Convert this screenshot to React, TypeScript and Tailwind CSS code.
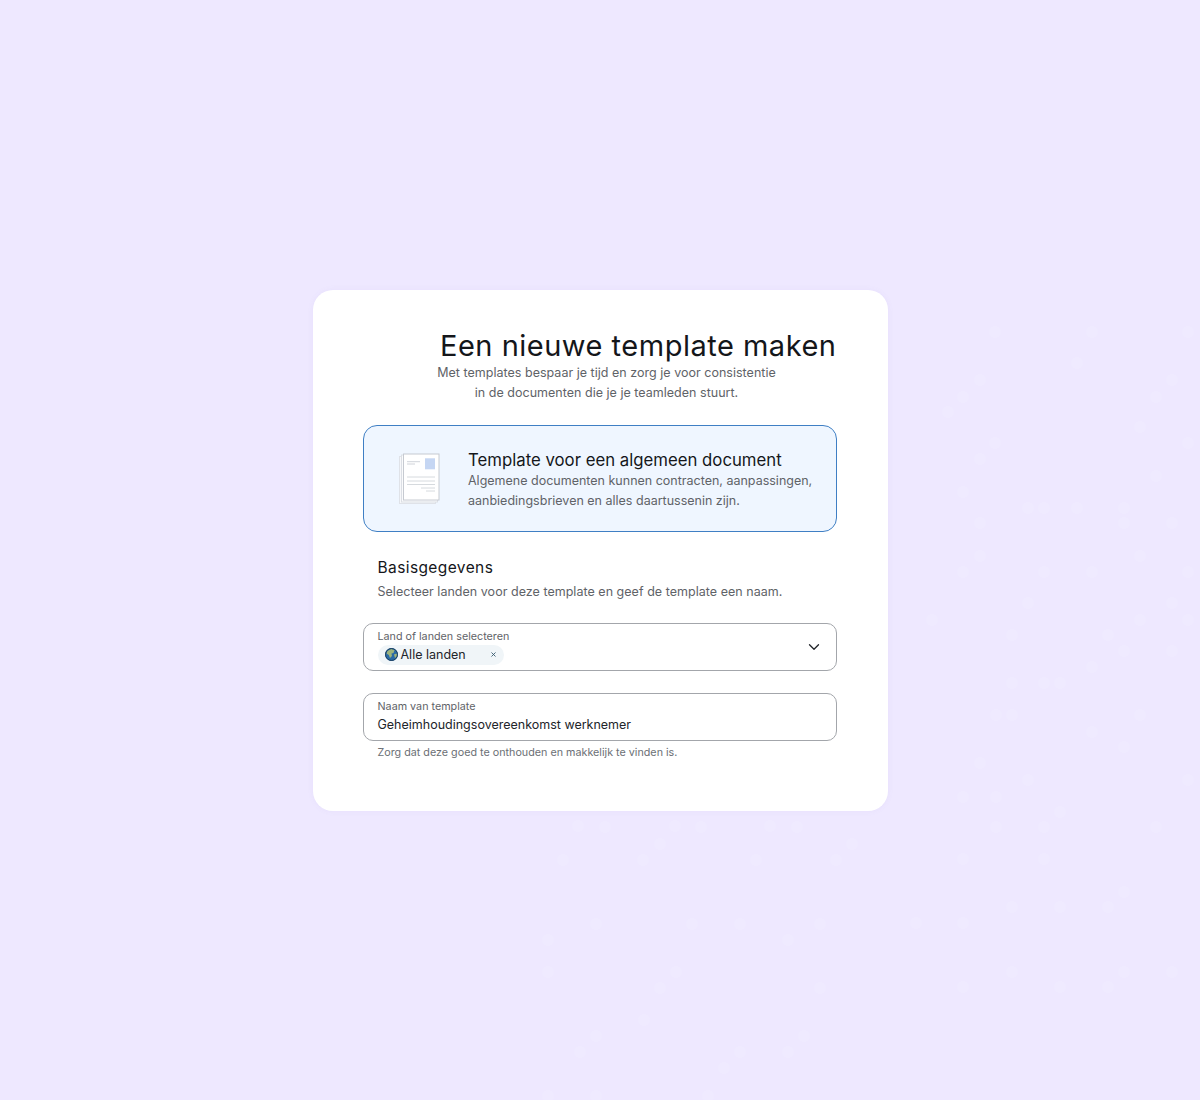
import { ChevronDown, X } from "lucide-react"

// faint dots in the page background
const dots = [
    [995, 332], [1092, 332], [1188, 332], [1077, 363], [980, 380], [1172, 380], [963, 397], [1156, 397], [948, 412],
    [1140, 427], [995, 443], [1188, 443], [980, 459], [1156, 476], [963, 492], [1028, 508], [1044, 508], [1077, 508],
    [1124, 508], [980, 523], [1124, 523], [1172, 523], [980, 556], [1140, 556], [963, 572], [1044, 572], [1092, 572],
    [1188, 572], [1028, 603], [1172, 603], [932, 620], [1140, 620], [1188, 620], [1012, 635], [1108, 635], [1124, 651],
    [1172, 651], [1092, 667], [1012, 683], [1044, 683], [1060, 683], [996, 715], [1012, 715], [1140, 715], [1092, 732],
    [1124, 747], [980, 763], [1028, 780], [1188, 780], [963, 797], [996, 797], [1060, 812], [996, 827], [1044, 827],
    [1156, 827], [963, 859], [1044, 859], [1124, 892], [1012, 907], [1060, 907], [1108, 907], [916, 923], [963, 923],
    [1012, 972], [1124, 972], [1172, 972], [963, 987], [1060, 987], [1108, 987],
    [578, 826], [605, 827], [675, 826], [701, 827], [770, 826], [797, 827], [563, 860], [643, 860], [660, 844],
    [756, 860], [836, 860], [852, 844], [596, 924], [692, 924], [740, 924], [820, 924], [548, 940], [788, 940],
    [548, 972], [676, 972], [660, 988], [820, 988], [644, 1020], [596, 1036], [804, 1036], [580, 1052], [740, 1052],
    [788, 1052], [724, 1068], [548, 1096], [596, 1096], [708, 1096],
]

function DocIcon() {
    return (
        <svg width="42" height="52" viewBox="0 0 42 52" fill="none">
            <rect x="0.5" y="3.5" width="36" height="47" fill="#f7f8fa" stroke="#dfe2e8" />
            <rect x="2.5" y="2" width="36" height="47" fill="#fafbfc" stroke="#dcdfe5" />
            <rect x="4.5" y="1" width="35.5" height="46" fill="#ffffff" stroke="#c6cad1" />
            <rect x="26" y="5.3" width="10" height="11" fill="#c5d6f3" />
            <path d="M8 8.7h13M8 11h8" stroke="#c4c8cf" strokeWidth="0.8" />
            <path d="M8 24h28M8 28h28M8 31.5h28" stroke="#ccd0d6" strokeWidth="0.8" />
            <path d="M22 35h14M27 38h9" stroke="#ccd0d6" strokeWidth="0.8" />
        </svg>
    )
}

function Globe() {
    return (
        <svg width="13" height="13" viewBox="0 0 13 13">
            <circle cx="6.5" cy="6.5" r="6.5" fill="#2a6aa6" />
            <path d="M2.5 3 6 1 9.5 2 8.5 5 6.5 5.5 7 8 5 10 3.8 7 1.5 5.5Z" fill="#9db37c" />
            <path d="M9 6.5 11.5 5.5 12 8 10 10Z" fill="#a3b57a" />
            <circle cx="6.5" cy="6.5" r="6" fill="none" stroke="#1d3f5e" strokeWidth="1" />
        </svg>
    )
}

export default function App() {
    return (
        <div className="relative min-h-[1100px] bg-[#eee8ff] pt-[290px] font-['Inter',sans-serif]">
            <svg className="pointer-events-none absolute inset-0" width="1200" height="1100">
                {dots.map(([x, y]) => (
                    <circle key={`${x}-${y}`} cx={x} cy={y} r="6" fill="#efeaff" />
                ))}
            </svg>
            <div className="relative ml-[313px] h-[521px] w-[575px] rounded-[20px] bg-white pt-[38px] pr-[51px] pl-[50px] shadow-[0_0_6px_rgba(120,100,200,0.06)]">
                <h1 className="pl-[77px] text-[29px] leading-[36px] font-normal tracking-[0.5px] whitespace-nowrap text-[#14161a]">
                    Een nieuwe template maken
                </h1>
                <p className="-mt-[1px] w-[487px] text-center text-[12.5px] leading-[20px] tracking-[0.02px] text-[#5f6368]">
                    Met templates bespaar je tijd en zorg je voor consistentie
                    <br />
                    in de documenten die je je teamleden stuurt.
                </p>

                <div className="mt-[22px] flex h-[107px] items-center rounded-[14px] border border-[#3f7fc4] bg-[#eff6ff] pl-[35px]">
                    <DocIcon />
                    <div className="ml-[27px] pt-[3px]">
                        <div className="text-[16.75px] leading-[22px] text-[#14161a]">Template voor een algemeen document</div>
                        <div className="text-[12.5px] leading-[20px] text-[#5f6368]">
                            Algemene documenten kunnen contracten, aanpassingen,
                            <br />
                            aanbiedingsbrieven en alles daartussenin zijn.
                        </div>
                    </div>
                </div>

                <div className="mt-[25px] px-[14.5px]">
                    <div className="text-[15.5px] leading-[22px] tracking-[0.4px] text-[#14161a]">Basisgegevens</div>
                    <div className="mt-[3px] text-[12.5px] leading-[20px] tracking-[0.03px] text-[#5f6368]">
                        Selecteer landen voor deze template en geef de template een naam.
                    </div>
                </div>

                <div className="mt-[21px] flex h-[48px] items-center justify-between rounded-[10px] border border-[#a3a6ab] pr-[13px] pl-[13.5px]">
                    <div>
                        <div className="text-[10.75px] leading-[14px] text-[#5f6368]">Land of landen selecteren</div>
                        <div className="mt-[1px] flex h-[20px] w-[126px] items-center rounded-full bg-[#f0f5f8] pl-[7px]">
                            <Globe />
                            <span className="ml-[3px] text-[12.5px] leading-[18px] text-[#22252a]">Alle landen</span>
                            <X className="ml-[24px] h-[7px] w-[7px] text-[#33566b]" strokeWidth={3} />
                        </div>
                    </div>
                    <ChevronDown className="h-[18px] w-[18px] text-[#22252a]" strokeWidth={1.75} />
                </div>

                <div className="mt-[22px] flex h-[48px] flex-col justify-center rounded-[10px] border border-[#a3a6ab] px-[13.5px]">
                    <div className="text-[10.75px] leading-[14px] text-[#5f6368]">Naam van template</div>
                    <div className="mt-[2px] text-[12.5px] leading-[18px] text-[#22252a]">Geheimhoudingsovereenkomst werknemer</div>
                </div>
                <div className="mt-[5px] px-[14.5px] text-[10.75px] leading-[14px] text-[#6b6f75]">
                    Zorg dat deze goed te onthouden en makkelijk te vinden is.
                </div>
            </div>
        </div>
    )
}
